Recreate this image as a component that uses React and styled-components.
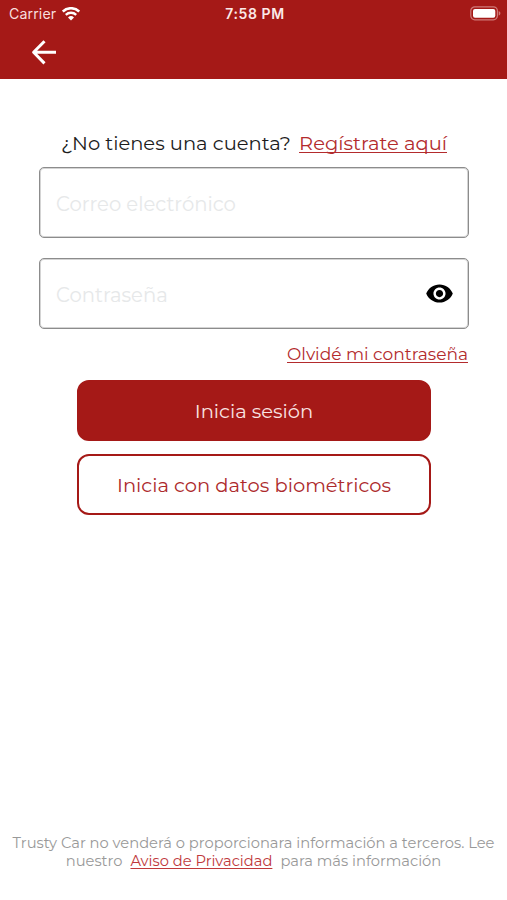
import React, { useState } from "react";
import { styled, createGlobalStyle } from "styled-components";

const GlobalStyle = createGlobalStyle`
  * {
    box-sizing: border-box;
  }

  body {
    margin: 0;
    background-color: #ffffff;
    font-family: Montserrat, Inter, sans-serif;
  }
`;

const Screen = styled.div`
  display: flex;
  flex-direction: column;
  height: 900px;
  overflow: hidden;
`;

const Header = styled.header`
  height: 79px;
  background-color: #a51917;
  color: #ffffff;
`;

const StatusBar = styled.div`
  display: grid;
  grid-template-columns: 1fr auto 1fr;
  align-items: center;
  height: 27px;
  padding: 0 6px 0 9px;
  font-family: Inter, sans-serif;
`;

const Carrier = styled.div`
  display: flex;
  align-items: center;
  gap: 6px;
  font-size: 14.2px;
  letter-spacing: 0.1px;
  color: #f8dedd;
`;

const Time = styled.div`
  font-size: 14px;
  font-weight: 600;
  letter-spacing: 0.6px;
  color: #fbe9e8;
`;

const BatteryIcon = styled.svg`
  justify-self: end;
`;

const BackButton = styled.button`
  display: block;
  margin: 12px 0 0 31px;
  padding: 0;
  border: none;
  background: none;
  line-height: 0;
  color: inherit;
`;

const Form = styled.form`
  display: flex;
  flex-direction: column;
  padding: 51px 38px 0 39px;
`;

const Prompt = styled.p`
  display: flex;
  justify-content: space-between;
  margin: 0 22px 11px 22px;
  padding-top: 1px;
  font-size: 19.5px;
  line-height: 25px;
  white-space: nowrap;
  color: #1c1c1c;
`;

const Link = styled.a`
  color: #b32b2d;
  text-decoration: underline;
  text-decoration-thickness: 1.3px;
  text-underline-offset: 1.5px;
  text-decoration-skip-ink: none;
`;

const Field = styled.div`
  display: flex;
  align-items: center;
  height: 71px;
  margin-bottom: ${(props) => props.$gap}px;
  padding: 0 14px 0 16px;
  border: 1px solid #8c8c8c;
  border-radius: 5px;
  box-shadow: inset 0 0 0 1px #d4d4d4;
`;

const Input = styled.input`
  flex: 1;
  min-width: 0;
  padding: 2px 0 0;
  border: none;
  outline: none;
  background: transparent;
  font-family: inherit;
  font-size: 19.6px;
  color: #1c1c1c;

  &::placeholder {
    color: #e6e8e9;
    opacity: 1;
  }
`;

const EyeButton = styled.button`
  padding: 0;
  border: none;
  background: none;
  line-height: 0;
  color: #000000;
`;

const Forgot = styled.div`
  align-self: flex-end;
  height: 36px;
  margin-right: 1px;
  font-size: 17.05px;
  line-height: 20px;
  white-space: nowrap;
`;

const Button = styled.button`
  height: 61px;
  margin: 0 38px 13px;
  padding: 0;
  border: 2px solid #a51917;
  border-radius: 12px;
  background-color: ${(props) => (props.$outlined ? "#ffffff" : "#a51917")};
  color: ${(props) => (props.$outlined ? "#ad2a2c" : "#f9e3e2")};
  font-family: inherit;
  font-size: 19.5px;
  white-space: nowrap;
`;

const Footer = styled.footer`
  margin-top: auto;
  padding-bottom: 30px;
  font-size: 14.7px;
  line-height: 18px;
  text-align: center;
  white-space: nowrap;
  color: #999999;
`;

const PrivacyLink = styled(Link)`
  margin: 0 8px;
  color: #c0393b;
`;

export default function App() {
  const [passwordVisible, setPasswordVisible] = useState(false);

  function handleSubmit(event) {
    event.preventDefault();
  }

  return (
    <Screen>
      <GlobalStyle />
      <Header>
        <StatusBar>
          <Carrier>
            Carrier
            <svg width="18" height="14" viewBox="0 0 18 14" fill="none">
              <path d="M.8 4.5a11.8 11.8 0 0 1 16.4 0" stroke="#fff" strokeWidth="2.5" />
              <path d="M3.8 7.9a7.4 7.4 0 0 1 10.4 0" stroke="#fff" strokeWidth="2.3" />
              <path d="M9 13.6 6 10.5a4.3 4.3 0 0 1 6 0Z" fill="#fff" />
            </svg>
          </Carrier>
          <Time>7:58 PM</Time>
          <BatteryIcon width="31" height="15" viewBox="0 0 31 15">
            <rect x="0.8" y="0.8" width="26.6" height="13" rx="4" fill="none" stroke="#cf7a79" strokeWidth="1.2" />
            <rect x="3" y="3" width="22.3" height="8.7" rx="2" fill="#fff" />
            <path d="M28.7 5v4.6c1-.4 1.7-1.3 1.7-2.3s-.7-1.9-1.7-2.3Z" fill="#cf7a79" />
          </BatteryIcon>
        </StatusBar>
        <BackButton type="button" aria-label="Atrás">
          <svg
            width="26"
            height="26"
            viewBox="0 0 26 26"
            fill="none"
            stroke="#fff"
            strokeWidth="3"
            strokeLinejoin="round"
          >
            <path d="M25 13.3H3M13.5 2.2 2.6 13.3l10.9 11.1" />
          </svg>
        </BackButton>
      </Header>

      <Form onSubmit={handleSubmit}>
        <Prompt>
          <span>¿No tienes una cuenta?</span>
          <Link>Regístrate aquí</Link>
        </Prompt>
        <Field $gap={20}>
          <Input type="email" placeholder="Correo electrónico" />
        </Field>
        <Field $gap={15}>
          <Input
            type={passwordVisible ? "text" : "password"}
            placeholder="Contraseña"
          />
          <EyeButton
            type="button"
            aria-label="Mostrar contraseña"
            onClick={() => setPasswordVisible(!passwordVisible)}
          >
            <svg width="29" height="29" viewBox="0 0 24 24" fill="currentColor">
              <path d="M12 4.5C7 4.5 2.73 7.61 1 12c1.73 4.39 6 7.5 11 7.5s9.27-3.11 11-7.5c-1.73-4.39-6-7.5-11-7.5zM12 17c-2.76 0-5-2.24-5-5s2.24-5 5-5 5 2.24 5 5-2.24 5-5 5zm0-8c-1.66 0-3 1.34-3 3s1.34 3 3 3 3-1.34 3-3-1.34-3-3-3z" />
            </svg>
          </EyeButton>
        </Field>
        <Forgot>
          <Link>Olvidé mi contraseña</Link>
        </Forgot>
        <Button type="submit">Inicia sesión</Button>
        <Button type="button" $outlined>
          Inicia con datos biométricos
        </Button>
      </Form>

      <Footer>
        Trusty Car no venderá o proporcionara información a terceros. Lee
        <br />
        nuestro
        <PrivacyLink>Aviso de Privacidad</PrivacyLink>
        para más información
      </Footer>
    </Screen>
  );
}
